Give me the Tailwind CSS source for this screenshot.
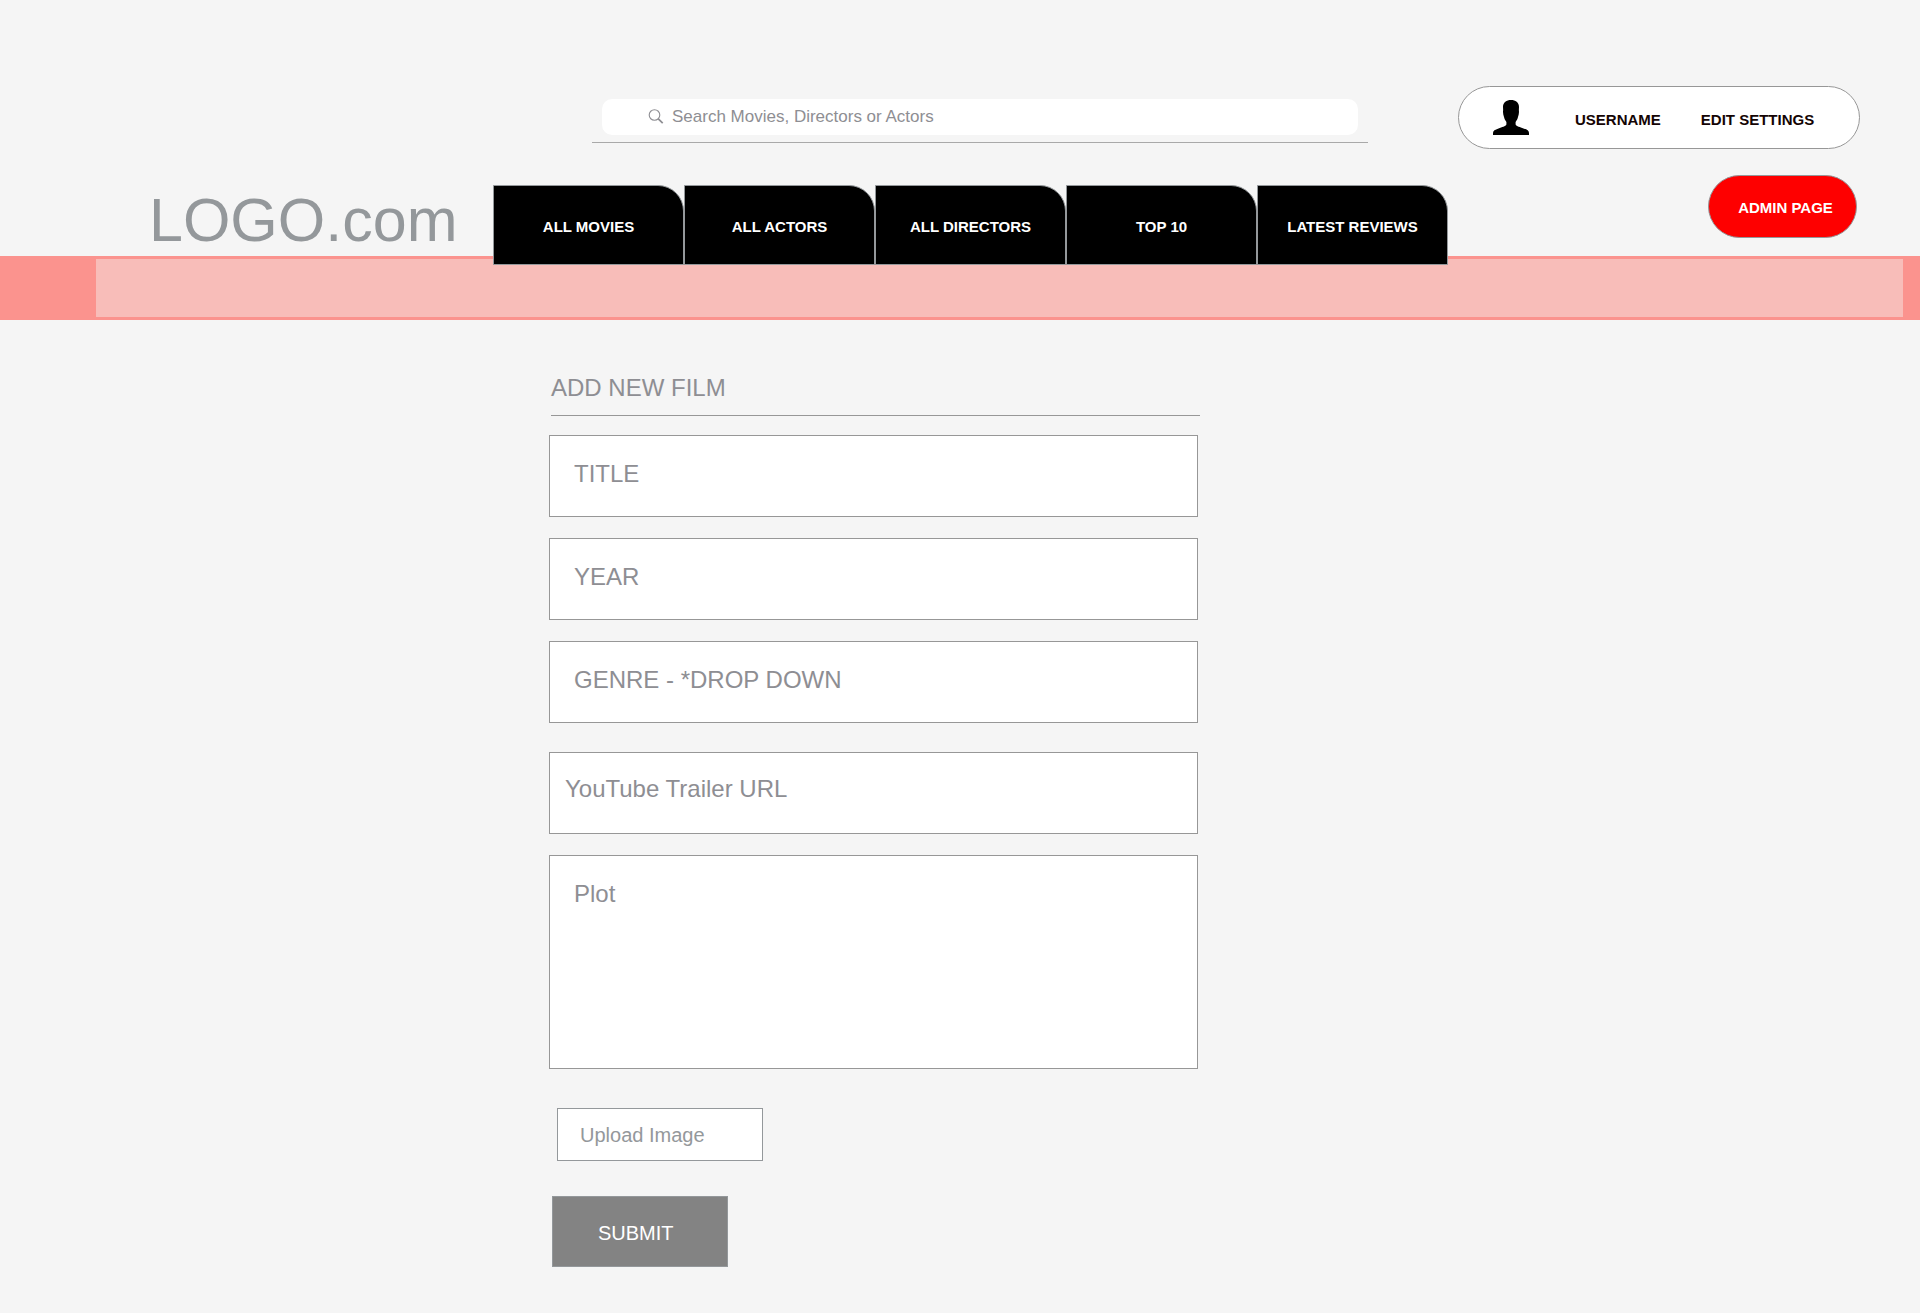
<!DOCTYPE html>
<html lang="en">
<head>
<meta charset="utf-8">
<meta name="viewport" content="width=device-width, initial-scale=1">
<title>Add new film</title>
<script src="https://cdn.jsdelivr.net/npm/@tailwindcss/browser@4"></script>
</head>
<body class="min-h-screen bg-[#f5f5f5] pb-11 font-['Liberation_Sans',Arial,sans-serif] text-[#8e8e93]">

<header class="relative z-10">
  <div class="flex items-start gap-[90px] pt-[86px] pr-[60px] pl-6 xl:pl-[592px]">
    <form role="search" class="mt-[13px] min-w-0 flex-1 border-b border-[#a9a9a9] px-[10px] pb-[7px]">
      <label class="flex h-9 items-center rounded-[10px] bg-white pl-[46px]">
        <svg class="size-4 shrink-0" viewBox="0 0 16 16" fill="none" stroke="#8e8e93" aria-hidden="true">
          <circle cx="6.5" cy="6" r="5.3" stroke-width="1.1"/>
          <path d="M10.3 9.8 14.7 14.2" stroke-width="1.7"/>
        </svg>
        <input type="search" aria-label="Search" placeholder="Search Movies, Directors or Actors" class="ml-2 min-w-0 flex-1 pr-4 text-[17px] leading-5 outline-none placeholder:text-[#8e8e93]">
      </label>
    </form>
    <div class="flex h-[63px] w-[402px] shrink-0 items-center rounded-full border border-[#979797] bg-white pl-[34px] text-[15px] leading-5 font-bold text-[#140404]">
      <svg class="h-[35px] w-9 shrink-0" viewBox="0 0 36 35" fill="#000" aria-hidden="true">
        <path d="M18 0C22.500 0 26 2.300 26 7C26 8.500 25.800 9.500 25.900 10.800C26.200 13 25.700 15 25 17C24.500 19 23.700 20.500 22.600 22L22.600 24.500C23.500 26.500 27 27 30.500 28.400C34 29.700 36 30.500 36 33L36 35L0 35L0 33C0 30.500 2 29.700 5.500 28.400C9 27 12.500 26.500 13.400 24.500L13.400 22C12.300 20.500 11.500 19 11 17C10.300 15 9.800 13 10.100 10.800C10.200 9.500 10 8.500 10 7C10 2.300 13.500 0 18 0Z"/>
      </svg>
      <a href="#" class="mt-1 ml-[46px]">USERNAME</a>
      <a href="#" class="mt-1 ml-10">EDIT SETTINGS</a>
    </div>
  </div>

  <div class="mt-[26px] flex items-start pr-[63px] pl-6 xl:pl-[149px]">
    <a href="#" class="mt-[15px] w-[344px] shrink-0 text-[61px] leading-[61px] text-[#94989b]">LOGO.com</a>
    <nav class="mt-[10px] grid w-[955px] grid-cols-5 text-center text-[15px] leading-5 font-bold text-white">
      <a href="#" class="flex h-20 items-center justify-center rounded-tr-[26px] border border-[#94989b] bg-black pt-1">ALL MOVIES</a>
      <a href="#" class="flex h-20 items-center justify-center rounded-tr-[26px] border border-[#94989b] bg-black pt-1">ALL ACTORS</a>
      <a href="#" class="flex h-20 items-center justify-center rounded-tr-[26px] border border-[#94989b] bg-black pt-1">ALL DIRECTORS</a>
      <a href="#" class="flex h-20 items-center justify-center rounded-tr-[26px] border border-[#94989b] bg-black pt-1">TOP 10</a>
      <a href="#" class="flex h-20 items-center justify-center rounded-tr-[26px] border border-[#94989b] bg-black pt-1">LATEST REVIEWS</a>
    </nav>
    <a href="#" class="ml-auto flex h-[63px] w-[149px] shrink-0 items-center justify-center rounded-full border border-[#94989b] bg-[#fe0000] pt-0.5 pl-1.5 text-[15px] leading-5 font-bold text-white">ADMIN PAGE</a>
  </div>
</header>

<div class="-mt-[9px] h-16 bg-[#fb938e] pt-[3px] pr-[17px] pb-[3px] pl-24">
  <div class="h-full bg-[#f8bdb9]"></div>
</div>

<main class="px-6 pt-[52px] xl:pl-[549px]">
  <form class="max-w-[649px]">
    <h1 class="ml-0.5 -mr-0.5 border-b border-[#979797] pt-0.5 pb-[13px] text-2xl leading-7">ADD NEW FILM</h1>
    <div class="mt-[19px] flex flex-col gap-[21px] text-2xl leading-7">
      <input type="text" aria-label="Title" placeholder="TITLE" class="h-[82px] border border-[#979797] bg-white px-6 pb-1 placeholder:text-[#8e8e93]">
      <input type="text" aria-label="Year" placeholder="YEAR" class="h-[82px] border border-[#979797] bg-white px-6 pb-1 placeholder:text-[#8e8e93]">
      <select aria-label="Genre" class="h-[82px] appearance-none border border-[#979797] bg-white px-6 pb-1">
        <option>GENRE - *DROP DOWN</option>
      </select>
      <input type="url" aria-label="YouTube Trailer URL" placeholder="YouTube Trailer URL" class="mt-2 h-[82px] border border-[#979797] bg-white px-[15px] pb-2 placeholder:text-[#8e8e93]">
      <textarea aria-label="Plot" placeholder="Plot" class="h-[214px] resize-none border border-[#979797] bg-white px-6 py-6 placeholder:text-[#8e8e93]"></textarea>
    </div>
    <div class="mt-[39px] ml-2 flex">
      <label for="poster" class="flex h-[53px] w-[206px] items-center border border-[#94989b] bg-white px-[22px] text-xl leading-6 text-[#94989b]">Upload Image</label>
      <input id="poster" type="file" class="sr-only">
    </div>
    <button type="submit" class="mt-[35px] ml-[3px] flex h-[71px] w-[176px] items-center border border-[#94989b] bg-[#838383] pt-0.5 pl-[45px] text-xl leading-6 text-white">SUBMIT</button>
  </form>
</main>

</body>
</html>
